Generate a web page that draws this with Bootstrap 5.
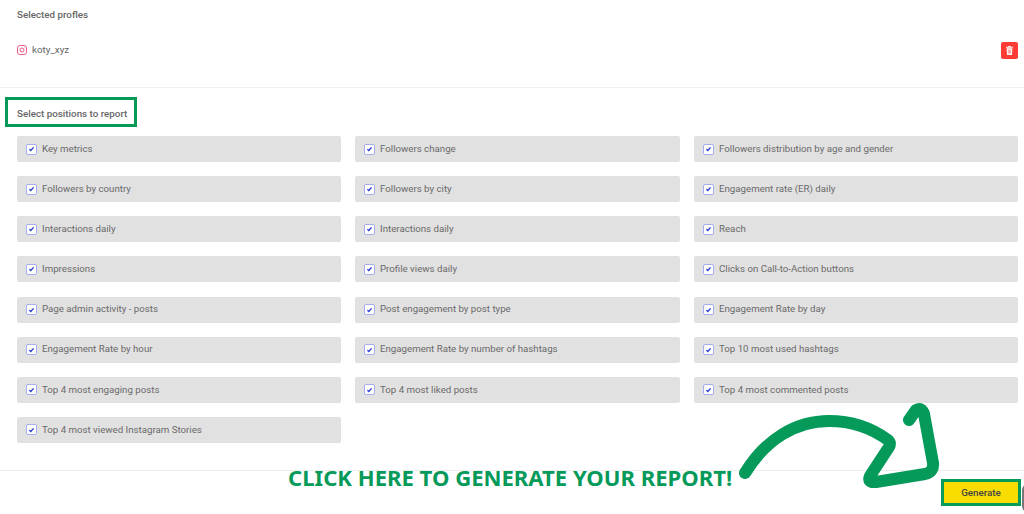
<!DOCTYPE html>
<html lang="en"><head><meta charset="utf-8"><title>Report</title>
<link href="https://cdn.jsdelivr.net/npm/bootstrap@5.3.0/dist/css/bootstrap.min.css" rel="stylesheet">
<style>
html,body{height:514px;overflow:hidden;background:#fff}
body{font-family:Roboto,"Liberation Sans",sans-serif;font-size:10px;color:#666;position:relative}
.sec-title{font-size:9.8px;font-weight:500;color:#666;line-height:14px}
.top-sec{height:88px;padding:8px 6px 0 17px;border-bottom:1px solid #eee}
.prof-row{margin-top:20px;height:16px}
.prof-gap{gap:5px}
.prof-name{font-size:9.8px;line-height:14px}
.trash-btn{width:17px;height:17px;background:#fb3b34;border:0;border-radius:2px;padding:0}
.mid-sec{height:383px;padding:19px 6px 0 17px;border-bottom:1px solid #eee}
.pos-grid{display:grid;grid-template-columns:324px 325px 324px;column-gap:14px;row-gap:14.15px;margin-top:15px}
.pos-item{height:26px;background:#e1e1e1;border-radius:2px;padding:0 9px;font-size:9.7px;color:#6a6a6a;gap:5px}
.chk{width:11px;height:11px;flex:none;background:#fff;border:1px solid #a5aef0;border-radius:2px}
.foot-sec{height:43px;padding:11px 6px 0 0}
.gen-btn{width:74px;height:21px;background:#f9dc00;border:0;border-radius:0;font-size:9.8px;font-weight:500;color:#444;padding:0;line-height:21px;outline:3px solid #059a5a;outline-offset:0}
.box-ann{position:absolute;left:5px;top:97px;width:132px;height:30px;border:3px solid #059a5a}
.click-ann{position:absolute;left:288px;top:463px;font-family:"Noto Sans",sans-serif;font-weight:700;font-size:22.1px;line-height:28px;color:#059a5a;white-space:nowrap}
.arrow-ann{position:absolute;left:730px;top:400px;width:220px;height:100px}
.edge-ann{position:absolute;left:1022px;top:484px;width:12px;height:28px;background:#777;border-radius:6px}
</style></head><body>
<div class="top-sec">
  <div class="sec-title">Selected profles</div>
  <div class="prof-row d-flex align-items-center justify-content-between">
    <div class="d-flex align-items-center prof-gap">
      <svg width="10" height="10" viewBox="0 0 10 10" fill="none" stroke="#ef5a86" stroke-width="1"><rect x=".5" y=".5" width="9" height="9" rx="2.4"/><circle cx="5" cy="5" r="2"/><circle cx="7.6" cy="2.4" r=".4" fill="#ef5a86" stroke="none"/></svg>
      <span class="prof-name">koty_xyz</span>
    </div>
    <button class="trash-btn d-flex align-items-center justify-content-center" aria-label="Delete">
      <svg width="7" height="9" viewBox="0 0 7 9" fill="#fff"><path d="M2.4 0h2.2l.3.7H7v1H0v-1h2.1zM.6 2.3h5.8L6 9H1z"/><path d="M2.3 3.5v4M3.5 3.5v4M4.7 3.5v4" stroke="#fb3b34" stroke-width=".5"/></svg>
    </button>
  </div>
</div>
<div class="mid-sec">
  <div class="sec-title">Select positions to report</div>
  <div class="pos-grid" id="g">
    <div class="pos-item d-flex align-items-center"><span class="chk d-flex align-items-center justify-content-center"><svg width="7" height="6" viewBox="0 0 7 6" fill="none" stroke="#2a3fd0" stroke-width="1.4"><path d="M1.4 3.2 2.8 4.5 5.6 1.4"/></svg></span>Key metrics</div>
    <div class="pos-item d-flex align-items-center"><span class="chk d-flex align-items-center justify-content-center"><svg width="7" height="6" viewBox="0 0 7 6" fill="none" stroke="#2a3fd0" stroke-width="1.4"><path d="M1.4 3.2 2.8 4.5 5.6 1.4"/></svg></span>Followers change</div>
    <div class="pos-item d-flex align-items-center"><span class="chk d-flex align-items-center justify-content-center"><svg width="7" height="6" viewBox="0 0 7 6" fill="none" stroke="#2a3fd0" stroke-width="1.4"><path d="M1.4 3.2 2.8 4.5 5.6 1.4"/></svg></span>Followers distribution by age and gender</div>
    <div class="pos-item d-flex align-items-center"><span class="chk d-flex align-items-center justify-content-center"><svg width="7" height="6" viewBox="0 0 7 6" fill="none" stroke="#2a3fd0" stroke-width="1.4"><path d="M1.4 3.2 2.8 4.5 5.6 1.4"/></svg></span>Followers by country</div>
    <div class="pos-item d-flex align-items-center"><span class="chk d-flex align-items-center justify-content-center"><svg width="7" height="6" viewBox="0 0 7 6" fill="none" stroke="#2a3fd0" stroke-width="1.4"><path d="M1.4 3.2 2.8 4.5 5.6 1.4"/></svg></span>Followers by city</div>
    <div class="pos-item d-flex align-items-center"><span class="chk d-flex align-items-center justify-content-center"><svg width="7" height="6" viewBox="0 0 7 6" fill="none" stroke="#2a3fd0" stroke-width="1.4"><path d="M1.4 3.2 2.8 4.5 5.6 1.4"/></svg></span>Engagement rate (ER) daily</div>
    <div class="pos-item d-flex align-items-center"><span class="chk d-flex align-items-center justify-content-center"><svg width="7" height="6" viewBox="0 0 7 6" fill="none" stroke="#2a3fd0" stroke-width="1.4"><path d="M1.4 3.2 2.8 4.5 5.6 1.4"/></svg></span>Interactions daily</div>
    <div class="pos-item d-flex align-items-center"><span class="chk d-flex align-items-center justify-content-center"><svg width="7" height="6" viewBox="0 0 7 6" fill="none" stroke="#2a3fd0" stroke-width="1.4"><path d="M1.4 3.2 2.8 4.5 5.6 1.4"/></svg></span>Interactions daily</div>
    <div class="pos-item d-flex align-items-center"><span class="chk d-flex align-items-center justify-content-center"><svg width="7" height="6" viewBox="0 0 7 6" fill="none" stroke="#2a3fd0" stroke-width="1.4"><path d="M1.4 3.2 2.8 4.5 5.6 1.4"/></svg></span>Reach</div>
    <div class="pos-item d-flex align-items-center"><span class="chk d-flex align-items-center justify-content-center"><svg width="7" height="6" viewBox="0 0 7 6" fill="none" stroke="#2a3fd0" stroke-width="1.4"><path d="M1.4 3.2 2.8 4.5 5.6 1.4"/></svg></span>Impressions</div>
    <div class="pos-item d-flex align-items-center"><span class="chk d-flex align-items-center justify-content-center"><svg width="7" height="6" viewBox="0 0 7 6" fill="none" stroke="#2a3fd0" stroke-width="1.4"><path d="M1.4 3.2 2.8 4.5 5.6 1.4"/></svg></span>Profile views daily</div>
    <div class="pos-item d-flex align-items-center"><span class="chk d-flex align-items-center justify-content-center"><svg width="7" height="6" viewBox="0 0 7 6" fill="none" stroke="#2a3fd0" stroke-width="1.4"><path d="M1.4 3.2 2.8 4.5 5.6 1.4"/></svg></span>Clicks on Call-to-Action buttons</div>
    <div class="pos-item d-flex align-items-center"><span class="chk d-flex align-items-center justify-content-center"><svg width="7" height="6" viewBox="0 0 7 6" fill="none" stroke="#2a3fd0" stroke-width="1.4"><path d="M1.4 3.2 2.8 4.5 5.6 1.4"/></svg></span>Page admin activity - posts</div>
    <div class="pos-item d-flex align-items-center"><span class="chk d-flex align-items-center justify-content-center"><svg width="7" height="6" viewBox="0 0 7 6" fill="none" stroke="#2a3fd0" stroke-width="1.4"><path d="M1.4 3.2 2.8 4.5 5.6 1.4"/></svg></span>Post engagement by post type</div>
    <div class="pos-item d-flex align-items-center"><span class="chk d-flex align-items-center justify-content-center"><svg width="7" height="6" viewBox="0 0 7 6" fill="none" stroke="#2a3fd0" stroke-width="1.4"><path d="M1.4 3.2 2.8 4.5 5.6 1.4"/></svg></span>Engagement Rate by day</div>
    <div class="pos-item d-flex align-items-center"><span class="chk d-flex align-items-center justify-content-center"><svg width="7" height="6" viewBox="0 0 7 6" fill="none" stroke="#2a3fd0" stroke-width="1.4"><path d="M1.4 3.2 2.8 4.5 5.6 1.4"/></svg></span>Engagement Rate by hour</div>
    <div class="pos-item d-flex align-items-center"><span class="chk d-flex align-items-center justify-content-center"><svg width="7" height="6" viewBox="0 0 7 6" fill="none" stroke="#2a3fd0" stroke-width="1.4"><path d="M1.4 3.2 2.8 4.5 5.6 1.4"/></svg></span>Engagement Rate by number of hashtags</div>
    <div class="pos-item d-flex align-items-center"><span class="chk d-flex align-items-center justify-content-center"><svg width="7" height="6" viewBox="0 0 7 6" fill="none" stroke="#2a3fd0" stroke-width="1.4"><path d="M1.4 3.2 2.8 4.5 5.6 1.4"/></svg></span>Top 10 most used hashtags</div>
    <div class="pos-item d-flex align-items-center"><span class="chk d-flex align-items-center justify-content-center"><svg width="7" height="6" viewBox="0 0 7 6" fill="none" stroke="#2a3fd0" stroke-width="1.4"><path d="M1.4 3.2 2.8 4.5 5.6 1.4"/></svg></span>Top 4 most engaging posts</div>
    <div class="pos-item d-flex align-items-center"><span class="chk d-flex align-items-center justify-content-center"><svg width="7" height="6" viewBox="0 0 7 6" fill="none" stroke="#2a3fd0" stroke-width="1.4"><path d="M1.4 3.2 2.8 4.5 5.6 1.4"/></svg></span>Top 4 most liked posts</div>
    <div class="pos-item d-flex align-items-center"><span class="chk d-flex align-items-center justify-content-center"><svg width="7" height="6" viewBox="0 0 7 6" fill="none" stroke="#2a3fd0" stroke-width="1.4"><path d="M1.4 3.2 2.8 4.5 5.6 1.4"/></svg></span>Top 4 most commented posts</div>
    <div class="pos-item d-flex align-items-center"><span class="chk d-flex align-items-center justify-content-center"><svg width="7" height="6" viewBox="0 0 7 6" fill="none" stroke="#2a3fd0" stroke-width="1.4"><path d="M1.4 3.2 2.8 4.5 5.6 1.4"/></svg></span>Top 4 most viewed Instagram Stories</div>
  </div>
</div>
<div class="foot-sec d-flex justify-content-end">
  <button class="gen-btn">Generate</button>
</div>
<div class="box-ann"></div>
<div class="click-ann">CLICK HERE TO GENERATE YOUR REPORT!</div>
<svg class="arrow-ann" viewBox="730 400 220 100" fill="none" stroke="#059a5a" stroke-width="12" stroke-linecap="round" stroke-linejoin="round"><path d="M745 473C766 439 796 421 829 421C853 421 873 429 888 440Q891 443 889 447L870 476Q867 483 876 482L925 474Q934 472 933 463L924 414Q922 407 916 410L909 420"/></svg>
<div class="edge-ann"></div>
<script src="https://cdn.jsdelivr.net/npm/bootstrap@5.3.0/dist/js/bootstrap.bundle.min.js"></script>
</body></html>
